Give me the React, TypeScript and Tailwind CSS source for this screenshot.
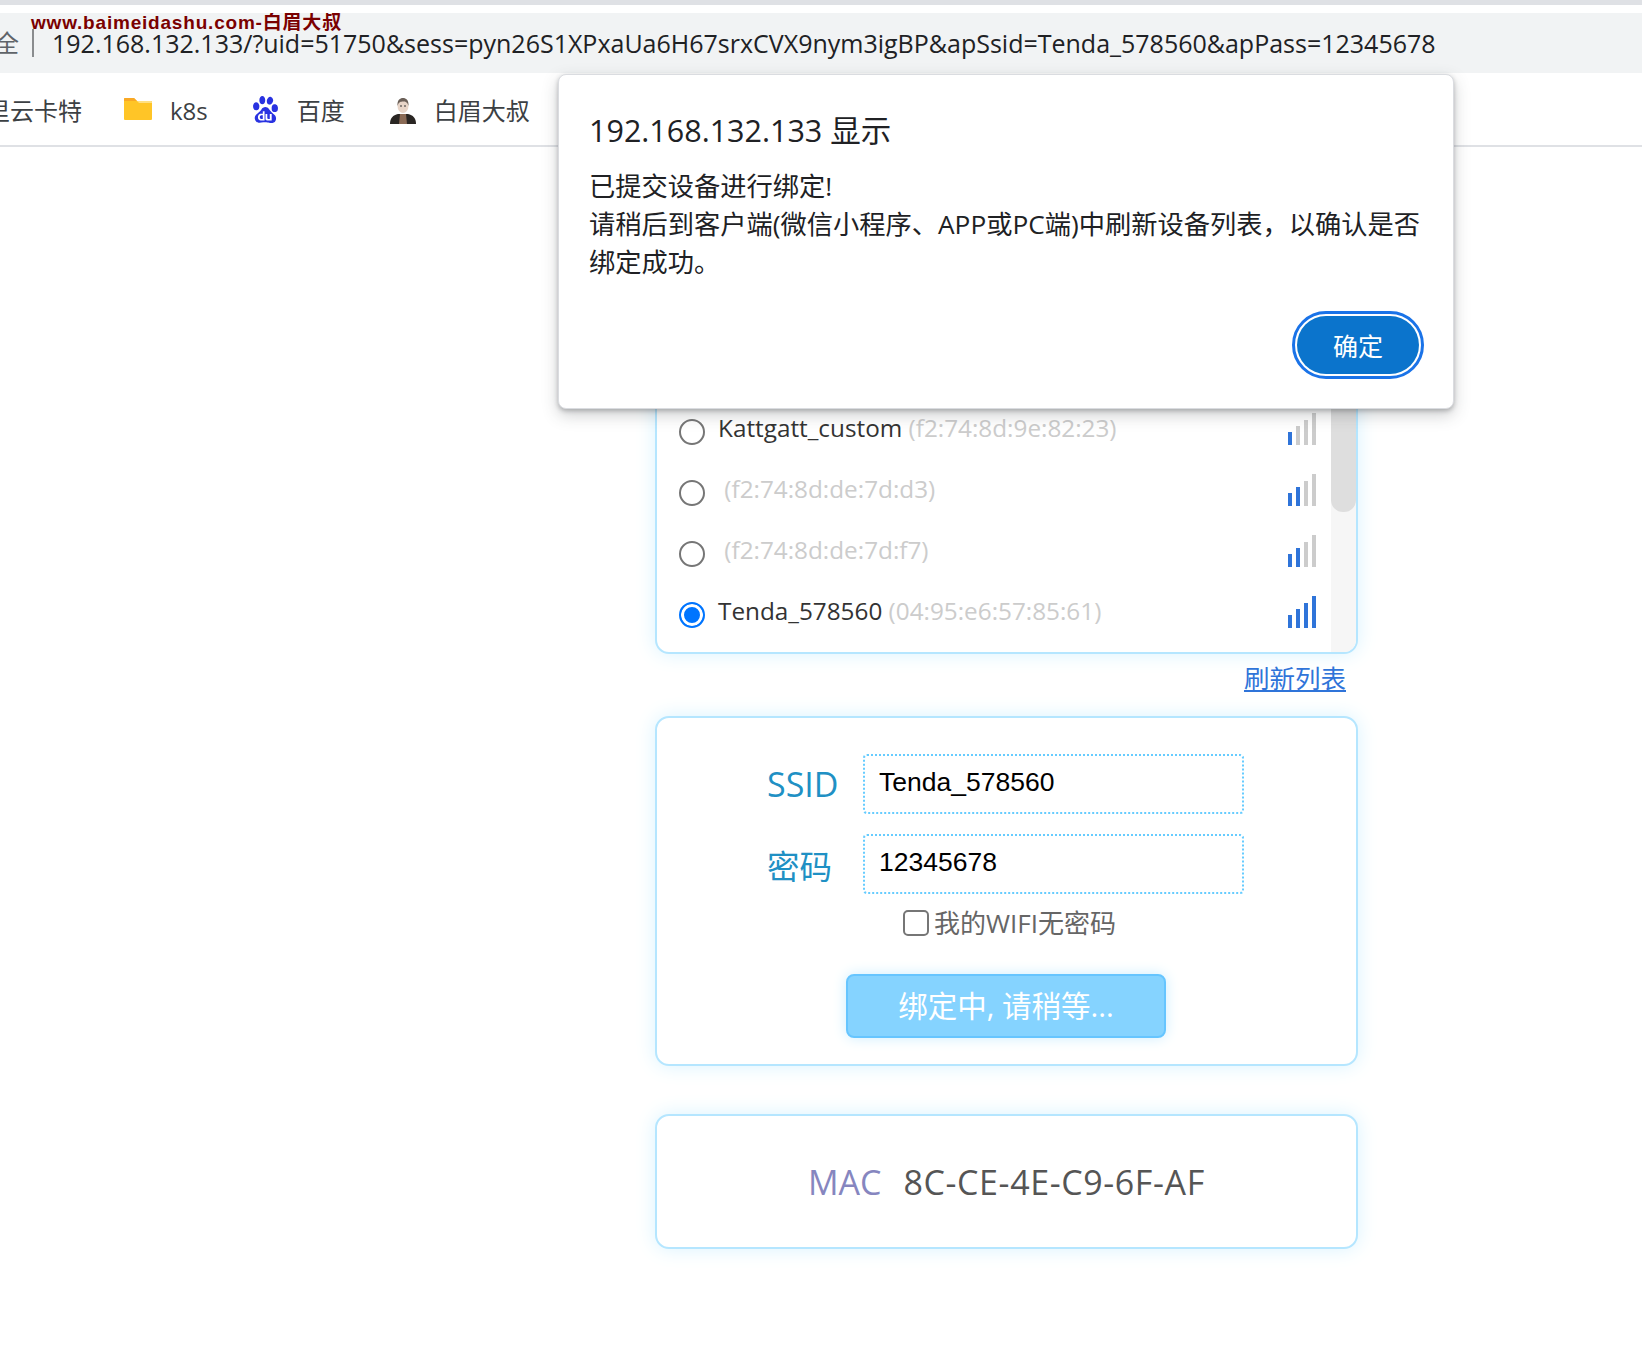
import React from "react";
import { SiBaidu } from "react-icons/si";

const sans = "font-['Open_Sans','Noto_Sans_CJK_SC',sans-serif]";

function Signal({ level }: { level: number }) {
  const heights = ["h-[13px]", "h-[19px]", "h-[25px]", "h-[32px]"];
  return (
    <div className="flex items-end gap-[4px]">
      {heights.map((h, i) => (
        <div key={h} className={`${h} w-[4px] ${i < level ? "bg-[#2f74d9]" : "bg-[#cccccc]"}`} />
      ))}
    </div>
  );
}

function Row({ name, mac, level, checked }: { name: string; mac: string; level: number; checked?: boolean }) {
  return (
    <div className="flex h-[61px] shrink-0 items-center pl-[22px] pr-[15px]">
      <input
        type="radio"
        name="wifi"
        defaultChecked={checked}
        className="m-0 mt-[6px] h-[26px] w-[26px] shrink-0 appearance-none rounded-full border-2 border-[#767676] bg-white checked:border-[#0075ff] checked:bg-[#0075ff] checked:shadow-[inset_0_0_0_3px_white]"
      />
      <div className={`ml-[13px] mb-[1px] flex-1 whitespace-pre text-[24.300px] leading-[34px] text-[#333] ${sans}`}>
        {name}
        <span className="text-[#cccccc] text-[24.300px]"> {mac}</span>
      </div>
      <Signal level={level} />
    </div>
  );
}

function Folder() {
  return (
    <svg width="28" height="22" viewBox="0 0 28 22" className="shrink-0">
      <path d="M1 0h9l3 3h14a1 1 0 0 1 1 1v17a1 1 0 0 1-1 1H1a1 1 0 0 1-1-1V1a1 1 0 0 1 1-1z" fill="#ffc527" />
      <path d="M0 1a1 1 0 0 1 1-1h9l3 3H0z" fill="#f9a825" />
      <path d="M13 3h14a1 1 0 0 1 1 1v1H15z" fill="#ffe082" />
    </svg>
  );
}

function Person() {
  return (
    <svg width="26" height="26" viewBox="0 0 26 26" className="mt-[3px] shrink-0">
      <path d="M0 26c0-6 3-9 8-10h10c5 1 8 4 8 10z" fill="#2a2623" />
      <path d="M10 16h6l1 10H9z" fill="#8a6a55" />
      <ellipse cx="13" cy="8" rx="5.5" ry="7" fill="#e8d5c8" />
      <path d="M7.5 8C7 2 10 0 13 0s6 2 5.5 8C17.5 4 15 3.5 13 3.5S8.500 4 7.500 8z" fill="#6b6058" />
      <path d="M10 8h2M14 8h2" stroke="#333" strokeWidth="1" />
    </svg>
  );
}

function Card({ children, className }: { children: React.ReactNode; className: string }) {
  return (
    <div className={`rounded-[14px] border-2 border-[#b5e6ff] bg-white shadow-[0_0_20px_#d9f3ff] ${className}`}>
      {children}
    </div>
  );
}

function Bookmark({ icon, label }: { icon: React.ReactNode; label: string }) {
  return (
    <div className="flex items-center gap-[18px]">
      <div>{icon}</div>
      <span className="pt-[3px] text-[24px] leading-[32px] text-[#3c4043]">{label}</span>
    </div>
  );
}

export default function App() {
  return (
    <div className={`relative h-[1355px] w-[1642px] overflow-hidden bg-white ${sans}`}>
      <div className="h-[5px] bg-[#dfe1e5]" />
      <div className="h-[8px] bg-white" />
      <div className="relative flex h-[60px] items-center overflow-hidden bg-[#f1f3f4]">
        <span className="ml-[-5px] w-[37px] shrink-0 text-[24px] leading-[32px] text-[#5f6368]">全</span>
        <div className="h-[28px] w-[2px] shrink-0 bg-[#8a8c8e]" />
        <span className="ml-[18px] whitespace-nowrap text-[25px] leading-[34px] text-[#202124]">
          192.168.132.133/?uid=51750&amp;sess=pyn26S1XPxaUa6H67srxCVX9nym3igBP&amp;apSsid=Tenda_578560&amp;apPass=12345678
        </span>
        <span className="absolute left-[31px] top-0 whitespace-nowrap font-['Liberation_Sans','Noto_Sans_CJK_SC',sans-serif] text-[19px] font-bold leading-[20px] tracking-[0.8px] text-[#7a0000]">
          www.baimeidashu.com-白眉大叔
        </span>
      </div>
      <div className="flex h-[74px] items-center gap-[38px] overflow-hidden border-b-2 border-[#dfe1e5] pl-0">
        <span className="ml-[-14px] whitespace-nowrap pt-[3px] text-[24px] leading-[32px] text-[#3c4043]">里云卡特</span>
        <div className="ml-[4px]"><Bookmark icon={<Folder />} label="k8s" /></div>
        <div className="ml-[6px]"><Bookmark icon={<SiBaidu size={27} color="#2932e1" />} label="百度" /></div>
        <div className="ml-[7px]"><Bookmark icon={<Person />} label="白眉大叔" /></div>
      </div>

      <div className="ml-[655px] w-[703px]">
        <Card className="mt-[114px] flex h-[393px] overflow-hidden">
          <div className="flex flex-1 flex-col justify-end pb-[10px]">
            <Row name="Kattgatt_custom" mac="(f2:74:8d:9e:82:23)" level={1} />
            <Row name="" mac="(f2:74:8d:de:7d:d3)" level={2} />
            <Row name="" mac="(f2:74:8d:de:7d:f7)" level={2} />
            <Row name="Tenda_578560" mac="(04:95:e6:57:85:61)" level={4} checked />
          </div>
          <div className="w-[25px] bg-[#f6f6f6]">
            <div className="h-[249px] rounded-b-[12px] bg-[#dedede]" />
          </div>
        </Card>
        <div className="mt-[5px] flex h-[37px] items-center justify-end pr-[12px]">
          <a className="text-[25.500px] leading-[36px] text-[#2f74d9] underline">刷新列表</a>
        </div>
        <Card className="mt-[20px] h-[350px] pt-[36px]">
          <div className="flex h-[60px] items-center pl-[110px]">
            <span className="w-[96px] text-[34px] leading-[40px] text-[#2090c4]">SSID</span>
            <input
              defaultValue="Tenda_578560"
              className="h-[60px] w-[381px] rounded-[4px] border-2 border-dotted border-[#66ccff] bg-white px-[14px] pb-[4px] font-['Liberation_Sans',sans-serif] text-[26.500px] text-black outline-none"
            />
          </div>
          <div className="mt-[20px] flex h-[60px] items-center pl-[110px]">
            <span className="w-[96px] pt-[5px] text-[32.500px] leading-[40px] text-[#2090c4]">密码</span>
            <input
              defaultValue="12345678"
              className="h-[60px] w-[381px] rounded-[4px] border-2 border-dotted border-[#66ccff] bg-white px-[14px] pb-[4px] font-['Liberation_Sans',sans-serif] text-[26.500px] text-black outline-none"
            />
          </div>
          <label className="mt-[14px] flex h-[30px] items-center pl-[246px]">
            <input
              type="checkbox"
              className="m-0 h-[26px] w-[26px] shrink-0 appearance-none rounded-[5px] border-2 border-[#767676] bg-white"
            />
            <span className="ml-[5px] text-[26px] leading-[30px] text-[#666]">我的WIFI无密码</span>
          </label>
          <div className="mt-[36px] flex justify-center pr-[1px]">
            <button className="h-[64px] w-[320px] rounded-[8px] border-2 border-[#66c5ff] bg-[#85d3ff] text-[29.500px] leading-[40px] text-white shadow-[0_0_14px_#cdeeff]">
              绑定中, 请稍等...
            </button>
          </div>
        </Card>
        <Card className="mt-[48px] flex h-[135px] items-center pl-[151px]">
          <span className="text-[34px] leading-[40px] text-[#8686bf]">MAC</span>
          <span className="ml-[22px] text-[34px] leading-[40px] tracking-[0.6px] text-[#555]">8C-CE-4E-C9-6F-AF</span>
        </Card>
      </div>

      <div className="absolute left-[558px] top-[74px] h-[335px] w-[896px] rounded-[8px] border border-[#dadce0] bg-white px-[30px] pt-[34px] shadow-[0_2px_4px_rgba(60,64,67,0.3),0_6px_16px_rgba(60,64,67,0.25)]">
        <div className="text-[30.500px] leading-[42px] text-[#202124]">192.168.132.133 显示</div>
        <div className="mt-[16px] text-[26.250px] leading-[38px] text-[#202124]">
          已提交设备进行绑定!
          <br />
          请稍后到客户端(微信小程序、APP或PC端)中刷新设备列表，以确认是否绑定成功。
        </div>
        <div className="absolute right-[29px] top-[236px] flex h-[68px] w-[132px] items-center justify-center rounded-full border-[3px] border-[#1a73e8] bg-white p-[2px]">
          <button className="h-full w-full rounded-full bg-[#0b74cc] pt-[2px] text-[25px] leading-[32px] text-white">确定</button>
        </div>
      </div>
    </div>
  );
}
